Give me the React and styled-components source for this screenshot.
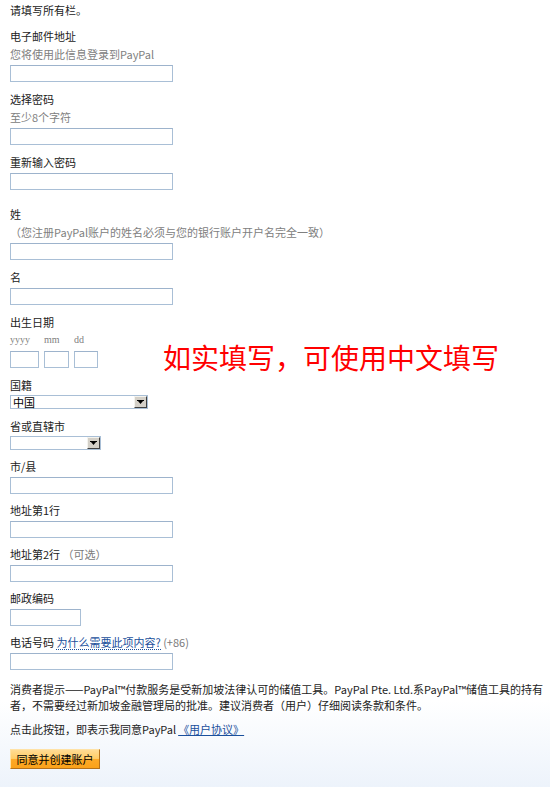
import React from 'react';
import styled, { createGlobalStyle } from 'styled-components';

const GlobalStyle = createGlobalStyle`
  html, body{
    margin: 0;
    padding: 0;
  }
  body{
    font-family: "Noto Sans CJK SC", "Noto Sans", sans-serif;
    font-size: 11px;
    color: #222;
  }
  *{
    box-sizing: border-box;
  }
`;

function SelectArrow(){
  return(
    <Arrow>
      <svg width="7" height="5" viewBox="0 0 7 5">
        <rect x="0" y="0" width="7" height="1" fill="#000" />
        <path d="M1 1 H6 L3.5 4 Z" fill="#000" />
      </svg>
    </Arrow>
  )
}

export default function App(){
  return(
    <>
      <GlobalStyle />
      <Page>
        <Intro>请填写所有栏。</Intro>

        <Field>
          <Label>电子邮件地址</Label>
          <Hint>您将使用此信息登录到PayPal</Hint>
          <Input width={ 163 } />
        </Field>

        <Field>
          <Label>选择密码</Label>
          <Hint>至少8个字符</Hint>
          <Input width={ 163 } />
        </Field>

        <Field>
          <Label>重新输入密码</Label>
          <Input width={ 163 } />
        </Field>

        <Field gap={ 15 }>
          <Label>姓</Label>
          <Hint>（您注册PayPal账户的姓名必须与您的银行账户开户名完全一致）</Hint>
          <Input width={ 163 } />
        </Field>

        <Field>
          <Label>名</Label>
          <Input width={ 163 } />
        </Field>

        <DateRow>
          <Field>
            <Label>出生日期</Label>
            <DateParts>
              <DatePart>
                <Placeholder>yyyy</Placeholder>
                <Input width={ 29 } />
              </DatePart>
              <DatePart>
                <Placeholder>mm</Placeholder>
                <Input width={ 25 } />
              </DatePart>
              <DatePart>
                <Placeholder>dd</Placeholder>
                <Input width={ 24 } />
              </DatePart>
            </DateParts>
          </Field>
          <Note>如实填写，可使用中文填写</Note>
        </DateRow>

        <Field>
          <Label>国籍</Label>
          <Select width={ 138 }>
            <span>中国</span>
            <SelectArrow />
          </Select>
        </Field>

        <Field>
          <Label>省或直辖市</Label>
          <Select width={ 91 }>
            <span />
            <SelectArrow />
          </Select>
        </Field>

        <Field gap={ 7 }>
          <Label>市/县</Label>
          <Input width={ 163 } />
        </Field>

        <Field gap={ 7 }>
          <Label>地址第1行</Label>
          <Input width={ 163 } />
        </Field>

        <Field gap={ 7 }>
          <Label>地址第2行 <Muted>（可选）</Muted></Label>
          <Input width={ 163 } />
        </Field>

        <Field gap={ 7 }>
          <Label>邮政编码</Label>
          <Input width={ 71 } />
        </Field>

        <Field gap={ 7 }>
          <Label>
            电话号码 <HelpLink href="#">为什么需要此项内容?</HelpLink> <Muted>(+86)</Muted>
          </Label>
          <Input width={ 163 } />
        </Field>

        <Notice>
          消费者提示——PayPal™付款服务是受新加坡法律认可的储值工具。PayPal Pte. Ltd.系PayPal™储值工具的持有者，不需要经过新加坡金融管理局的批准。建议消费者（用户）仔细阅读条款和条件。
        </Notice>

        <Agreement>
          点击此按钮，即表示我同意PayPal<AgreementLink href="#">《用户协议》</AgreementLink>
        </Agreement>

        <SubmitButton>同意并创建账户</SubmitButton>
      </Page>
    </>
  )
}


const Page = styled.div`
  min-height: 787px;
  padding: 1px 10px 0;
  background: linear-gradient(to bottom, #fff 0, #fff 89%, #edf3fb 100%);
`;

const Intro = styled.div`
  line-height: 18px;
  color: #222;
`;

const Field = styled.div`
  margin-top: ${ ({ gap }) => gap ?? 8 }px;
`;

const Label = styled.div`
  line-height: 18px;
  color: #222;
  white-space: nowrap;
`;

const Hint = styled.div`
  line-height: 18px;
  color: #808080;
  white-space: nowrap;
`;

const Muted = styled.span`
  color: #7a7a7a;
`;

const Input = styled.input`
  display: block;
  width: ${ ({ width }) => width }px;
  height: 17px;
  margin: 2px 0 0;
  padding: 0 2px;
  border: 1px solid #a9bfd6;
  border-top-color: #9db3cc;
  background: #fff;
  font: inherit;
  outline: none;
`;

const DateRow = styled.div`
  display: flex;
  align-items: flex-end;
`;

const DateParts = styled.div`
  display: flex;
  gap: 5px;
`;

const DatePart = styled.div`
  display: flex;
  flex-direction: column;
`;

const Placeholder = styled.div`
  line-height: 18px;
  font-family: "Liberation Serif", serif;
  font-size: 10px;
  color: #808080;
`;

const Note = styled.div`
  margin: 0 0 -4px 65px;
  font-size: 28px;
  line-height: 30px;
  color: #ff0000;
  white-space: nowrap;
`;

const Select = styled.div`
  display: flex;
  align-items: center;
  justify-content: space-between;
  width: ${ ({ width }) => width }px;
  height: 14px;
  margin-top: 1px;
  padding-left: 2px;
  border: 1px solid #a9bfd6;
  background: #fff;
  color: #000;
  font-size: 11px;
  line-height: 12px;
`;

const Arrow = styled.span`
  display: flex;
  align-items: center;
  justify-content: center;
  width: 13px;
  height: 12px;
  background: #d4d0c8;
  border-style: solid;
  border-width: 1px;
  border-color: #f4f3ee #404040 #404040 #f4f3ee;
`;

const HelpLink = styled.a`
  display: inline-block;
  line-height: 14px;
  color: #1a4f9c;
  text-decoration: none;
  border-bottom: 1px dotted #1a4f9c;
`;

const Notice = styled.p`
  width: 537px;
  margin: 11px 0 0;
  line-height: 16px;
  color: #222;
`;

const Agreement = styled.p`
  margin: 8px 0 0;
  line-height: 16px;
  color: #222;
`;

const AgreementLink = styled.a`
  margin-left: 2px;
  color: #1a4f9c;
  text-decoration: underline;
`;

const SubmitButton = styled.button`
  display: block;
  width: 90px;
  height: 20px;
  margin-top: 12px;
  padding: 0;
  font: inherit;
  font-size: 11px;
  color: #000;
  background: linear-gradient(to bottom, #ffdb93 0%, #ffcc66 48%, #fda928 52%, #fba21a 100%);
  border: 1px solid;
  border-color: #ffe2a6 #b5711a #b5711a #ffe2a6;
  cursor: pointer;
`;
